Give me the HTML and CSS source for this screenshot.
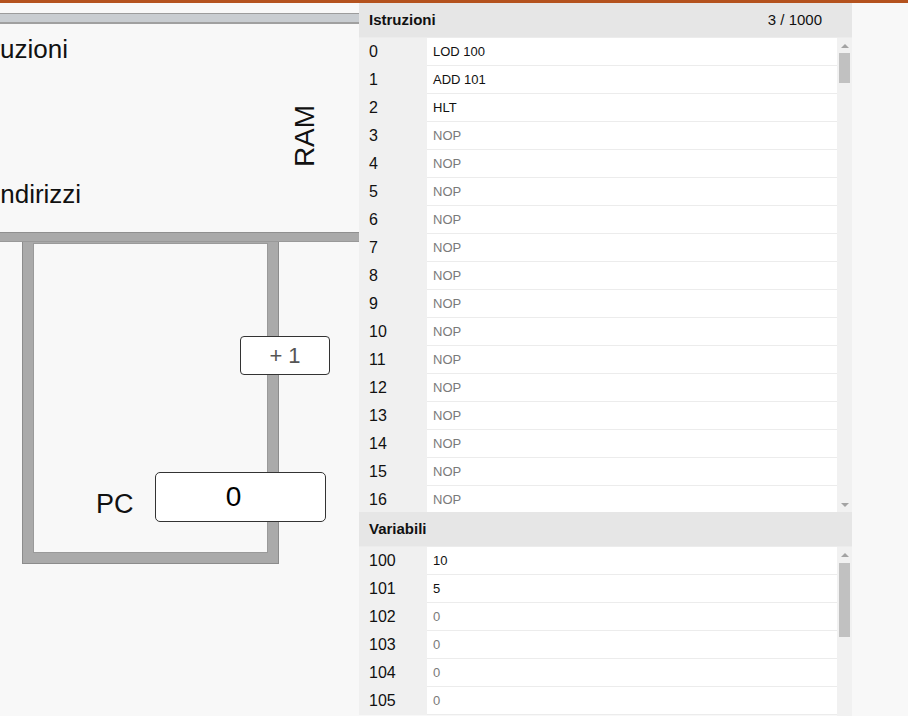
FILE: index.html
```html
<!DOCTYPE html>
<html lang="it">
<head>
<meta charset="utf-8">
<title>CPU</title>
<link rel="stylesheet" href="styles.css">
</head>
<body>
<div class="accent"></div>
<div class="main">
  <div class="canvas">
    <div class="bus-bar"></div>
    <div class="label label-istr">Istruzioni</div>
    <div class="label label-ind">Indirizzi</div>
    <div class="label label-ram">RAM</div>
    <div class="loop"><div class="loop-inner"></div></div>
    <div class="bus-addr"></div>
    <div class="box box-inc">+ 1</div>
    <div class="label label-pc">PC</div>
    <div class="box box-pc">0</div>
  </div>

  <div class="panel">
    <div class="panel-head"><span>Istruzioni</span><span class="count">3 / 1000</span></div>
    <div class="list list-istr">
      <div class="rows">
        <div class="row"><div class="idx">0</div><div class="val">LOD 100</div></div>
        <div class="row"><div class="idx">1</div><div class="val">ADD 101</div></div>
        <div class="row"><div class="idx">2</div><div class="val">HLT</div></div>
        <div class="row"><div class="idx">3</div><div class="val empty">NOP</div></div>
        <div class="row"><div class="idx">4</div><div class="val empty">NOP</div></div>
        <div class="row"><div class="idx">5</div><div class="val empty">NOP</div></div>
        <div class="row"><div class="idx">6</div><div class="val empty">NOP</div></div>
        <div class="row"><div class="idx">7</div><div class="val empty">NOP</div></div>
        <div class="row"><div class="idx">8</div><div class="val empty">NOP</div></div>
        <div class="row"><div class="idx">9</div><div class="val empty">NOP</div></div>
        <div class="row"><div class="idx">10</div><div class="val empty">NOP</div></div>
        <div class="row"><div class="idx">11</div><div class="val empty">NOP</div></div>
        <div class="row"><div class="idx">12</div><div class="val empty">NOP</div></div>
        <div class="row"><div class="idx">13</div><div class="val empty">NOP</div></div>
        <div class="row"><div class="idx">14</div><div class="val empty">NOP</div></div>
        <div class="row"><div class="idx">15</div><div class="val empty">NOP</div></div>
        <div class="row"><div class="idx">16</div><div class="val empty">NOP</div></div>
      </div>
      <div class="sb">
        <div class="sb-btn"><span class="tri-up"></span></div>
        <div class="sb-track"><div class="sb-thumb thumb-istr"></div></div>
        <div class="sb-btn"><span class="tri-down"></span></div>
      </div>
    </div>

    <div class="panel-head head-var"><span>Variabili</span></div>
    <div class="list list-var">
      <div class="rows">
        <div class="row"><div class="idx">100</div><div class="val">10</div></div>
        <div class="row"><div class="idx">101</div><div class="val">5</div></div>
        <div class="row"><div class="idx">102</div><div class="val empty">0</div></div>
        <div class="row"><div class="idx">103</div><div class="val empty">0</div></div>
        <div class="row"><div class="idx">104</div><div class="val empty">0</div></div>
        <div class="row"><div class="idx">105</div><div class="val empty">0</div></div>
      </div>
      <div class="sb">
        <div class="sb-btn"><span class="tri-up"></span></div>
        <div class="sb-track"><div class="sb-thumb thumb-var"></div></div>
      </div>
    </div>
  </div>
  <div class="spacer"></div>
</div>
</body>
</html>
```

FILE: styles.css
```css
html, body {
  margin: 0;
  padding: 0;
  background: #f8f8f8;
  font-family: "Liberation Sans", Arial, sans-serif;
  color: #111;
  overflow: hidden;
}
.accent {
  height: 3px;
  background: #b4521e;
}
.main {
  display: flex;
  height: 713px;
}
.canvas {
  position: relative;
  width: 359px;
  flex: none;
  overflow: hidden;
  background: #f8f8f8;
}
.bus-bar {
  position: absolute;
  left: 0;
  top: 10px;
  width: 359px;
  height: 8px;
  background: #c9cdd1;
  border-top: 1px solid #9c9c9c;
  border-bottom: 2px solid #a0a0a0;
}
.label {
  position: absolute;
  font-size: 26px;
  line-height: 26px;
  white-space: nowrap;
  color: #111;
}
.label-istr { left: -36px; top: 33px; }
.label-ind { left: -7px; top: 178px; }
.label-ram {
  left: 274px;
  top: 119px;
  font-size: 28px;
  line-height: 28px;
  transform: rotate(-90deg);
}
.loop {
  position: absolute;
  left: 22px;
  top: 229px;
  width: 255px;
  height: 330px;
  background: #aaaaaa;
  border: 1px solid #8c8c8c;
}
.loop-inner {
  position: absolute;
  left: 10px;
  top: 10px;
  width: 233px;
  height: 308px;
  background: #f8f8f8;
  border: 1px solid #9a9a9a;
}
.bus-addr {
  position: absolute;
  left: 0;
  top: 229px;
  width: 359px;
  height: 8px;
  background: #aaaaaa;
  border-top: 1px solid #909090;
  border-bottom: 1px solid #999;
}
.box {
  position: absolute;
  display: flex;
  align-items: center;
  justify-content: center;
  background: #fff;
  border: 1px solid #333;
  box-sizing: border-box;
}
.box-inc {
  left: 240px;
  top: 333px;
  width: 90px;
  height: 39px;
  border-radius: 4px;
  font-size: 22px;
  color: #555;
}
.box-pc {
  left: 155px;
  top: 469px;
  width: 171px;
  height: 50px;
  padding-right: 14px;
  border-radius: 5px;
  font-size: 28px;
  color: #000;
}
.label-pc {
  left: 96px;
  top: 488px;
  font-size: 27px;
  line-height: 27px;
}

.panel {
  width: 493px;
  flex: none;
  display: flex;
  flex-direction: column;
}
.panel-head {
  height: 34px;
  flex: none;
  display: flex;
  align-items: center;
  justify-content: space-between;
  padding: 0 30px 2px 10px;
  box-sizing: border-box;
  background: #e6e6e6;
  border-bottom: 1px solid #ececec;
  font-size: 15px;
  font-weight: bold;
  color: #111;
  height: 35px;
}
.panel-head .count {
  font-weight: normal;
}
.list {
  display: flex;
  overflow: hidden;
}
.list-istr { height: 474px; flex: none; }
.list-var { flex: 1; }
.rows {
  flex: 1;
  overflow: hidden;
}
.row {
  display: flex;
  height: 28px;
}
.idx {
  width: 58px;
  padding-left: 10px;
  background: #f0f0f0;
  font-size: 16px;
  line-height: 28px;
  color: #111;
}
.val {
  flex: 1;
  padding-left: 6px;
  background: #fff;
  border-bottom: 1px solid #ececec;
  font-size: 13px;
  line-height: 27px;
  color: #111;
}
.val.empty { color: #7a7a7a; }

.sb {
  width: 15px;
  flex: none;
  background: #f1f1f1;
  display: flex;
  flex-direction: column;
}
.sb-btn {
  height: 15px;
  flex: none;
  display: flex;
  align-items: center;
  justify-content: center;
}
.sb-track { flex: 1; }
.sb-thumb {
  margin: 0 2px;
  background: #c1c1c1;
}
.thumb-istr { height: 30px; }
.thumb-var { height: 74px; margin-top: 1px; }
.tri-up {
  width: 0;
  height: 0;
  border-left: 4px solid transparent;
  border-right: 4px solid transparent;
  border-bottom: 4px solid #a3a3a3;
}
.tri-down {
  width: 0;
  height: 0;
  border-left: 4px solid transparent;
  border-right: 4px solid transparent;
  border-top: 4px solid #a3a3a3;
}
.spacer { flex: 1; }
```
